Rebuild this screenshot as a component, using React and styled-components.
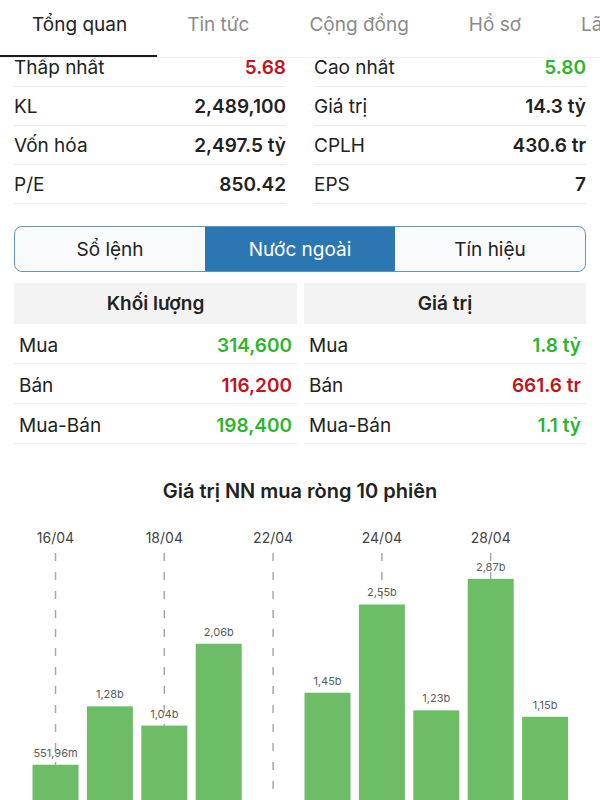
import React from "react";
import styled, { createGlobalStyle } from "styled-components";

const GlobalStyle = createGlobalStyle`
  html, body {
    margin: 0;
    padding: 0;
    background: #fff;
  }
  body {
    font-family: Inter, "Noto Sans", "Liberation Sans", sans-serif;
    color: #222;
    overflow: hidden;
  }
`;

const tabs = ["Tổng quan", "Tin tức", "Cộng đồng", "Hồ sơ", "Lãi"];

const stats = [
  [
    { label: "Thấp nhất", value: "5.68", color: "#c2141e" },
    { label: "KL", value: "2,489,100" },
    { label: "Vốn hóa", value: "2,497.5 tỷ" },
    { label: "P/E", value: "850.42" },
  ],
  [
    { label: "Cao nhất", value: "5.80", color: "#2db52d" },
    { label: "Giá trị", value: "14.3 tỷ" },
    { label: "CPLH", value: "430.6 tr" },
    { label: "EPS", value: "7" },
  ],
];

const foreign = [
  {
    title: "Khối lượng",
    rows: [
      { label: "Mua", value: "314,600", color: "#2db52d" },
      { label: "Bán", value: "116,200", color: "#c2141e" },
      { label: "Mua-Bán", value: "198,400", color: "#2db52d" },
    ],
  },
  {
    title: "Giá trị",
    rows: [
      { label: "Mua", value: "1.8 tỷ", color: "#2db52d" },
      { label: "Bán", value: "661.6 tr", color: "#c2141e" },
      { label: "Mua-Bán", value: "1.1 tỷ", color: "#2db52d" },
    ],
  },
];

const bars = [
  { v: 0.552, label: "551,96m" },
  { v: 1.28, label: "1,28b" },
  { v: 1.04, label: "1,04b" },
  { v: 2.06, label: "2,06b" },
  null,
  { v: 1.45, label: "1,45b" },
  { v: 2.55, label: "2,55b" },
  { v: 1.23, label: "1,23b" },
  { v: 2.87, label: "2,87b" },
  { v: 1.15, label: "1,15b" },
];

const dates = ["16/04", "18/04", "22/04", "24/04", "28/04"];

function Chart() {
  const step = 54.4;
  const barW = 46;
  const left0 = 32.5;
  const base = 294;
  const scale = 80.2;
  return (
    <svg width="600" height="285" viewBox="0 0 600 285">
      {dates.map((d, i) => {
        const cx = left0 + i * 2 * step + barW / 2;
        return (
          <g key={d}>
            <text
              x={cx}
              y={28}
              textAnchor="middle"
              fontSize="14"
              fill="#444"
              fontFamily="Inter, sans-serif"
            >
              {d}
            </text>
            <line
              x1={cx}
              x2={cx}
              y1={38}
              y2={285}
              stroke="#a8a8a8"
              strokeWidth="1.5"
              strokeDasharray="8 11"
            />
          </g>
        );
      })}
      {bars.map((b, i) => {
        if (!b) return null;
        const x = left0 + i * step;
        const top = base - b.v * scale;
        return (
          <g key={i}>
            <rect x={x} y={top} width={barW} height={base - top} fill="#6dbd67" />
            <text
              x={x + barW / 2}
              y={top - 8}
              textAnchor="middle"
              fontSize="11"
              fill="#5c5c5c"
              fontFamily="Inter, sans-serif"
            >
              {b.label}
            </text>
          </g>
        );
      })}
    </svg>
  );
}

export default function App() {
  return (
    <Page>
      <GlobalStyle />
      <TabBar>
        {tabs.map((t, i) => (
          <Tab key={t} active={i === 0}>
            {t}
          </Tab>
        ))}
      </TabBar>

      <StatsGrid>
        {stats.map((col, ci) => (
          <StatCol key={ci}>
            {col.map((s) => (
              <StatRow key={s.label}>
                <Label>{s.label}</Label>
                <Value color={s.color}>{s.value}</Value>
              </StatRow>
            ))}
          </StatCol>
        ))}
      </StatsGrid>

      <Segment>
        <SegButton>Sổ lệnh</SegButton>
        <SegButton active>Nước ngoài</SegButton>
        <SegButton>Tín hiệu</SegButton>
      </Segment>

      <ForeignGrid>
        {foreign.map((col) => (
          <ForeignCol key={col.title}>
            <ColHeader>{col.title}</ColHeader>
            {col.rows.map((r) => (
              <ForeignRow key={r.label}>
                <Label>{r.label}</Label>
                <Value color={r.color}>{r.value}</Value>
              </ForeignRow>
            ))}
          </ForeignCol>
        ))}
      </ForeignGrid>

      <ChartSection>
        <ChartTitle>Giá trị NN mua ròng 10 phiên</ChartTitle>
        <Chart />
      </ChartSection>
    </Page>
  );
}

const Page = styled.div`
  width: 600px;
  height: 800px;
  overflow: hidden;
  background: #fff;
`;

const TabBar = styled.div`
  position: relative;
  z-index: 1;
  display: flex;
  height: 58px;
  background: #fff;
  border-bottom: 1px solid #f0f0f0;
  box-sizing: border-box;
  white-space: nowrap;
  overflow: hidden;
`;

const Tab = styled.div`
  flex: none;
  display: flex;
  align-items: center;
  padding: 0 30px 6px;
  font-size: 19px;
  color: ${(p) => (p.active ? "#222" : "#8a8a8a")};
  border-bottom: 2px solid ${(p) => (p.active ? "#1c1c1c" : "transparent")};
  &:first-child {
    padding-left: 32px;
  }
`;

const StatsGrid = styled.div`
  display: grid;
  grid-template-columns: 1fr 1fr;
  column-gap: 28px;
  padding: 0 14px;
  margin-top: -10px;
`;

const StatCol = styled.div`
  display: flex;
  flex-direction: column;
`;

const StatRow = styled.div`
  display: flex;
  align-items: center;
  justify-content: space-between;
  height: 39px;
  border-bottom: 1px solid #ededed;
  box-sizing: border-box;
`;

const Label = styled.span`
  font-size: 19px;
  color: #222;
`;

const Value = styled.span`
  font-size: 19px;
  font-weight: 600;
  color: ${(p) => p.color || "#222"};
`;

const Segment = styled.div`
  display: grid;
  grid-template-columns: repeat(3, 1fr);
  margin: 22px 14px 0;
  height: 46px;
  border: 1.5px solid #5f95c0;
  border-radius: 8px;
  overflow: hidden;
  box-sizing: border-box;
  background: #f8fafc;
`;

const SegButton = styled.div`
  display: flex;
  align-items: center;
  justify-content: center;
  font-size: 19px;
  color: ${(p) => (p.active ? "#fff" : "#222")};
  background: ${(p) => (p.active ? "#2b77b1" : "transparent")};
`;

const ForeignGrid = styled.div`
  display: grid;
  grid-template-columns: 283px 282px;
  column-gap: 7px;
  padding: 0 14px;
  margin-top: 11px;
`;

const ForeignCol = styled.div`
  display: flex;
  flex-direction: column;
`;

const ColHeader = styled.div`
  height: 41px;
  display: flex;
  align-items: center;
  justify-content: center;
  background: #f3f3f3;
  font-size: 19px;
  font-weight: 600;
  color: #222;
`;

const ForeignRow = styled.div`
  display: flex;
  align-items: center;
  justify-content: space-between;
  height: 40px;
  padding: 4px 5px 0;
  border-bottom: 1px solid #ededed;
  box-sizing: border-box;
`;

const ChartSection = styled.div`
  display: flex;
  flex-direction: column;
  align-items: center;
  margin-top: 34px;
`;

const ChartTitle = styled.div`
  font-size: 20px;
  font-weight: 600;
  line-height: 26px;
  color: #222;
  margin-bottom: 11px;
`;
